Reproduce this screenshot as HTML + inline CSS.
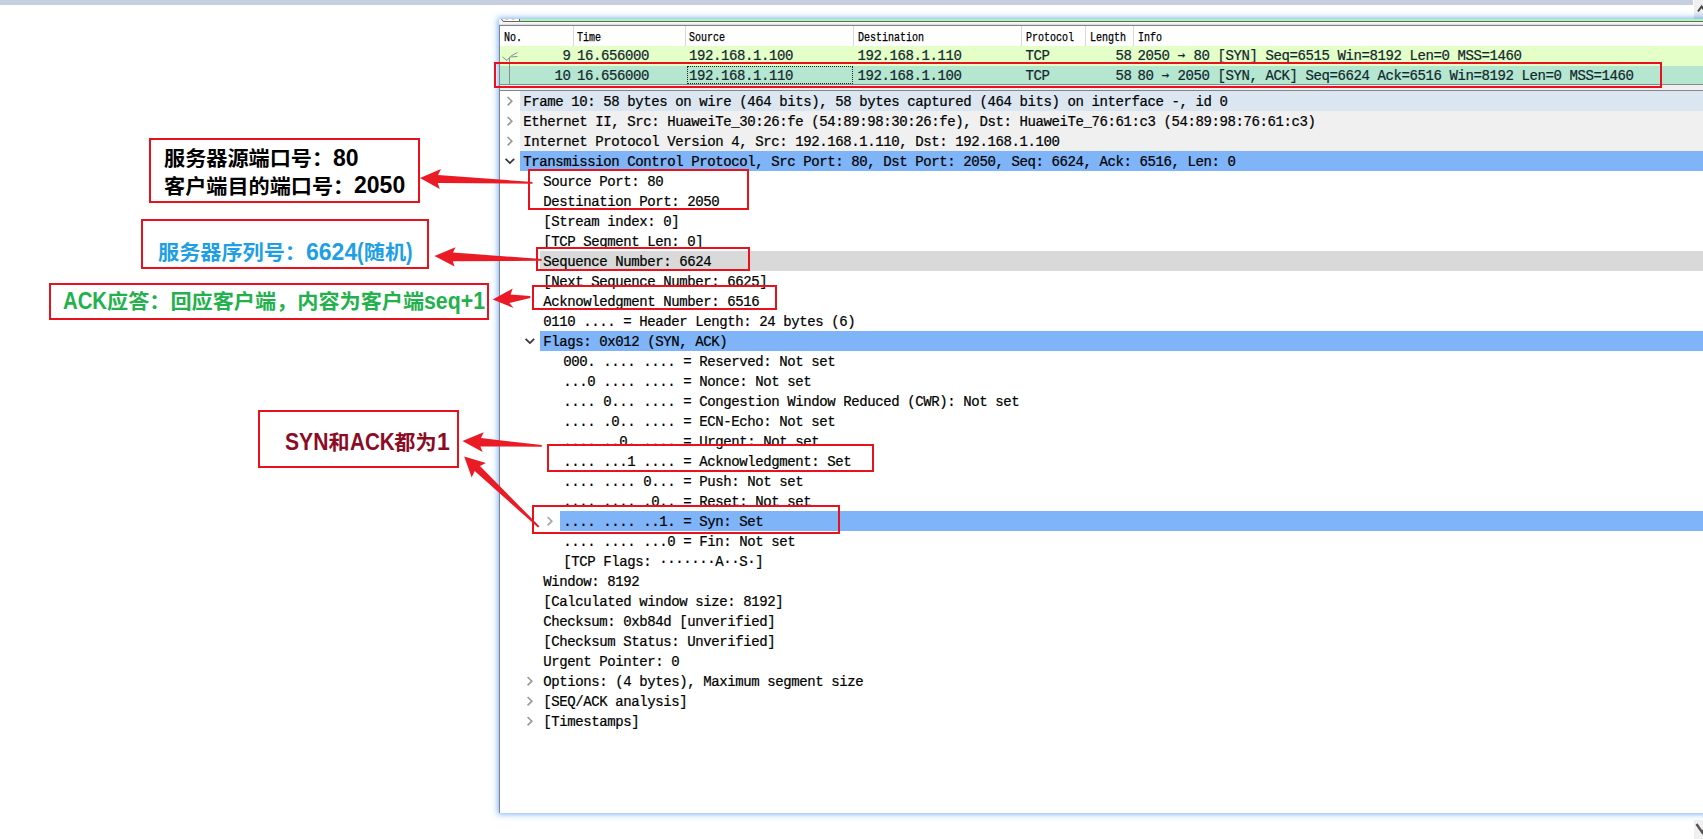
<!DOCTYPE html>
<html lang="zh-CN"><head><meta charset="utf-8"><title>TCP SYN ACK</title>
<style>
html,body{margin:0;padding:0;background:#fff;}
body{width:1703px;height:839px;position:relative;overflow:hidden;}
.abs{position:absolute;}
.topband{left:0;top:0;width:1693px;height:5px;background:#c6cfe0;}
.sbtop{left:1694px;top:0;width:9px;height:19px;background:linear-gradient(#f0f0f0 60%,#d8dde6);}
.sbbot{left:1694px;top:820px;width:9px;height:19px;background:#f0f0f0;}
.ws{left:499px;top:19px;width:1210px;height:794px;background:#fff;box-shadow:0 0 6px 1px rgba(95,160,250,.85);}
.mono{font-family:"Liberation Mono", "DejaVu Sans Mono", monospace;font-size:14px;letter-spacing:-0.4px;color:#000;-webkit-text-stroke:0.22px #000;white-space:pre;line-height:20px;height:20px;}
.hdr{font-family:"Liberation Mono","DejaVu Sans Mono",monospace;font-size:12px;line-height:20px;height:20px;color:#000;-webkit-text-stroke:0.25px #000;white-space:pre;transform:scaleX(.8333);transform-origin:0 50%;}
.pl{color:#12272e;-webkit-text-stroke-color:#12272e;}
.ar{font-family:"DejaVu Sans Mono","Liberation Mono",monospace;font-size:12.5px;letter-spacing:0;display:inline-block;width:8px;text-align:center;position:relative;top:-1px;}
.row{left:520px;height:20px;width:1190px;}
.box{border:2px solid #e9111b;box-sizing:border-box;}
.note{font-family:"Liberation Sans","Noto Sans CJK SC",sans-serif;font-weight:bold;font-size:21.15px;white-space:pre;line-height:28.63px;transform:scaleY(.95);transform-origin:0 0;}
.l{display:inline-block;transform-origin:0 50%;line-height:20px;vertical-align:-0.3px;}

</style></head><body>
<div class="abs topband"></div>
<div class="abs sbtop"></div>
<div class="abs sbbot"></div>
<svg class="abs" style="left:1694px;top:0" width="9" height="19" viewBox="0 0 9 19"><path d="M4 11.5 L7.6 6.5 L11 11.5" fill="none" stroke="#444" stroke-width="2"/></svg>
<svg class="abs" style="left:1694px;top:820px" width="9" height="19" viewBox="0 0 9 19"><path d="M2.5 4 L8.3 12.5 L13 4" fill="none" stroke="#555" stroke-width="2.4"/></svg>
<div class="abs ws"></div>
<div class="abs" style="left:499px;top:19px;width:1204px;height:2px;background:#aafaa8"></div>
<div class="abs" style="left:499px;top:19px;width:21px;height:3px;background:#f2f2f2"></div>
<div class="abs" style="left:503px;top:19px;width:16px;height:2px;background:#fff;border-right:1px solid #6a6464"></div>
<svg class="abs" style="left:499px;top:19px" width="8" height="4" viewBox="0 0 8 4"><path d="M2 -0.5 L4.2 2.4 L8 2.4" fill="none" stroke="#6a6464" stroke-width="1"/></svg>
<div class="abs" style="left:506px;top:19px;width:2px;height:1px;background:#f4d526"></div>
<div class="abs" style="left:512px;top:19px;width:2px;height:1px;background:#f4d526"></div>
<div class="abs" style="left:503px;top:21px;width:1200px;height:1px;background:#6a6464"></div>
<div class="abs" style="left:499px;top:22px;width:1204px;height:3px;background:linear-gradient(#fcfcfc,#ededed 70%,#c8c8cc)"></div>
<div class="abs" style="left:499px;top:25px;width:1204px;height:1px;background:#80848e"></div>
<div class="abs" style="left:499px;top:25px;width:1px;height:788px;background:#80848e"></div>
<div class="abs hdr" style="left:503.5px;top:27.5px">No.</div>
<div class="abs hdr" style="left:577px;top:27.5px">Time</div>
<div class="abs hdr" style="left:689px;top:27.5px">Source</div>
<div class="abs hdr" style="left:857.5px;top:27.5px">Destination</div>
<div class="abs hdr" style="left:1025.5px;top:27.5px">Protocol</div>
<div class="abs hdr" style="left:1089.5px;top:27.5px">Length</div>
<div class="abs hdr" style="left:1137.5px;top:27.5px">Info</div>
<div class="abs" style="left:573px;top:26px;width:1px;height:20px;background:#d9d9d9"></div>
<div class="abs" style="left:685px;top:26px;width:1px;height:20px;background:#d9d9d9"></div>
<div class="abs" style="left:853px;top:26px;width:1px;height:20px;background:#d9d9d9"></div>
<div class="abs" style="left:1021px;top:26px;width:1px;height:20px;background:#d9d9d9"></div>
<div class="abs" style="left:1085px;top:26px;width:1px;height:20px;background:#d9d9d9"></div>
<div class="abs" style="left:1133px;top:26px;width:1px;height:20px;background:#d9d9d9"></div>
<div class="abs" style="left:500px;top:46px;width:1203px;height:20px;background:#e4ffc7"></div>
<div class="abs" style="left:500px;top:66px;width:1203px;height:18px;background:#b5e6cf"></div>
<div class="abs" style="left:500px;top:84px;width:1203px;height:1px;background:#8a8a8a"></div>
<div class="abs" style="left:500px;top:85px;width:1203px;height:5px;background:#f0f0f0"></div>
<div class="abs" style="left:500px;top:90px;width:1203px;height:1px;background:#82878f"></div>
<div class="abs mono pl" style="left:500px;top:46px;width:70.5px;text-align:right">9</div>
<div class="abs mono pl" style="left:577px;top:46px">16.656000</div>
<div class="abs mono pl" style="left:689px;top:46px">192.168.1.100</div>
<div class="abs mono pl" style="left:857.5px;top:46px">192.168.1.110</div>
<div class="abs mono pl" style="left:1025.5px;top:46px">TCP</div>
<div class="abs mono pl" style="left:1089px;top:46px;width:42.5px;text-align:right">58</div>
<div class="abs mono pl" style="left:1137.5px;top:46px">2050 <span class="ar">→</span> 80 [SYN] Seq=6515 Win=8192 Len=0 MSS=1460</div>
<div class="abs mono pl" style="left:500px;top:65.8px;width:70.5px;text-align:right">10</div>
<div class="abs mono pl" style="left:577px;top:65.8px">16.656000</div>
<div class="abs mono pl" style="left:689px;top:65.8px">192.168.1.110</div>
<div class="abs mono pl" style="left:857.5px;top:65.8px">192.168.1.100</div>
<div class="abs mono pl" style="left:1025.5px;top:65.8px">TCP</div>
<div class="abs mono pl" style="left:1089px;top:65.8px;width:42.5px;text-align:right">58</div>
<div class="abs mono pl" style="left:1137.5px;top:65.8px">80 <span class="ar">→</span> 2050 [SYN, ACK] Seq=6624 Ack=6516 Win=8192 Len=0 MSS=1460</div>
<div class="abs" style="left:687px;top:66px;width:166px;height:18px;box-sizing:border-box;border:1px dotted #222"></div>
<svg class="abs" style="left:499px;top:46px" width="24" height="40" viewBox="0 0 24 40"><g fill="none" stroke="#8c8c98" stroke-width="1"><path d="M3.5 11 L8 14.5 L10.5 11.5"/><path d="M10.5 38 L10.5 11 L18.5 10.5"/><path d="M12 10 L18.5 6.5"/></g></svg>
<div class="abs" style="left:520px;top:91px;width:1183px;height:20px;background:#dce6f1"></div>
<div class="abs mono" style="left:523.3px;top:91.5px">Frame 10: 58 bytes on wire (464 bits), 58 bytes captured (464 bits) on interface -, id 0</div>
<svg class="abs" style="left:504.5px;top:95px" width="10" height="12" viewBox="0 0 10 12"><path d="M2.6 2 L6.8 6.2 L2.6 10.4" fill="none" stroke="#9c9c9c" stroke-width="1.7"/></svg>
<div class="abs" style="left:520px;top:111px;width:1183px;height:20px;background:#f0f0f0"></div>
<div class="abs mono" style="left:523.3px;top:111.5px">Ethernet II, Src: HuaweiTe_30:26:fe (54:89:98:30:26:fe), Dst: HuaweiTe_76:61:c3 (54:89:98:76:61:c3)</div>
<svg class="abs" style="left:504.5px;top:115px" width="10" height="12" viewBox="0 0 10 12"><path d="M2.6 2 L6.8 6.2 L2.6 10.4" fill="none" stroke="#9c9c9c" stroke-width="1.7"/></svg>
<div class="abs" style="left:520px;top:131px;width:1183px;height:20px;background:#f0f0f0"></div>
<div class="abs mono" style="left:523.3px;top:131.5px">Internet Protocol Version 4, Src: 192.168.1.110, Dst: 192.168.1.100</div>
<svg class="abs" style="left:504.5px;top:135px" width="10" height="12" viewBox="0 0 10 12"><path d="M2.6 2 L6.8 6.2 L2.6 10.4" fill="none" stroke="#9c9c9c" stroke-width="1.7"/></svg>
<div class="abs" style="left:520px;top:151px;width:1183px;height:20px;background:#7fb4f8"></div>
<div class="abs mono" style="left:523.3px;top:151.5px">Transmission Control Protocol, Src Port: 80, Dst Port: 2050, Seq: 6624, Ack: 6516, Len: 0</div>
<svg class="abs" style="left:503.5px;top:156.5px" width="12" height="10" viewBox="0 0 12 10"><path d="M1.6 1.8 L5.9 6.1 L10.2 1.8" fill="none" stroke="#383838" stroke-width="1.8"/></svg>
<div class="abs mono" style="left:543.3px;top:171.5px">Source Port: 80</div>
<div class="abs mono" style="left:543.3px;top:191.5px">Destination Port: 2050</div>
<div class="abs mono" style="left:543.3px;top:211.5px">[Stream index: 0]</div>
<div class="abs mono" style="left:543.3px;top:231.5px">[TCP Segment Len: 0]</div>
<div class="abs" style="left:540px;top:251px;width:1163px;height:20px;background:#d9d9d9"></div>
<div class="abs mono" style="left:543.3px;top:251.5px">Sequence Number: 6624</div>
<div class="abs mono" style="left:543.3px;top:271.5px">[Next Sequence Number: 6625]</div>
<div class="abs mono" style="left:543.3px;top:291.5px">Acknowledgment Number: 6516</div>
<div class="abs mono" style="left:543.3px;top:311.5px">0110 .... = Header Length: 24 bytes (6)</div>
<div class="abs" style="left:540px;top:331px;width:1163px;height:20px;background:#7fb4f8"></div>
<div class="abs mono" style="left:543.3px;top:331.5px">Flags: 0x012 (SYN, ACK)</div>
<svg class="abs" style="left:523.5px;top:336.5px" width="12" height="10" viewBox="0 0 12 10"><path d="M1.6 1.8 L5.9 6.1 L10.2 1.8" fill="none" stroke="#383838" stroke-width="1.8"/></svg>
<div class="abs mono" style="left:563.3px;top:351.5px">000. .... .... = Reserved: Not set</div>
<div class="abs mono" style="left:563.3px;top:371.5px">...0 .... .... = Nonce: Not set</div>
<div class="abs mono" style="left:563.3px;top:391.5px">.... 0... .... = Congestion Window Reduced (CWR): Not set</div>
<div class="abs mono" style="left:563.3px;top:411.5px">.... .0.. .... = ECN-Echo: Not set</div>
<div class="abs mono" style="left:563.3px;top:431.5px">.... ..0. .... = Urgent: Not set</div>
<div class="abs mono" style="left:563.3px;top:451.5px">.... ...1 .... = Acknowledgment: Set</div>
<div class="abs mono" style="left:563.3px;top:471.5px">.... .... 0... = Push: Not set</div>
<div class="abs mono" style="left:563.3px;top:491.5px">.... .... .0.. = Reset: Not set</div>
<div class="abs" style="left:560px;top:511px;width:1143px;height:20px;background:#7fb4f8"></div>
<div class="abs mono" style="left:563.3px;top:511.5px">.... .... ..1. = Syn: Set</div>
<svg class="abs" style="left:544.5px;top:515px" width="10" height="12" viewBox="0 0 10 12"><path d="M2.6 2 L6.8 6.2 L2.6 10.4" fill="none" stroke="#a6a6a6" stroke-width="1.7"/></svg>
<div class="abs mono" style="left:563.3px;top:531.5px">.... .... ...0 = Fin: Not set</div>
<div class="abs mono" style="left:563.3px;top:551.5px">[TCP Flags: ·······A··S·]</div>
<div class="abs mono" style="left:543.3px;top:571.5px">Window: 8192</div>
<div class="abs mono" style="left:543.3px;top:591.5px">[Calculated window size: 8192]</div>
<div class="abs mono" style="left:543.3px;top:611.5px">Checksum: 0xb84d [unverified]</div>
<div class="abs mono" style="left:543.3px;top:631.5px">[Checksum Status: Unverified]</div>
<div class="abs mono" style="left:543.3px;top:651.5px">Urgent Pointer: 0</div>
<div class="abs mono" style="left:543.3px;top:671.5px">Options: (4 bytes), Maximum segment size</div>
<svg class="abs" style="left:524.5px;top:675px" width="10" height="12" viewBox="0 0 10 12"><path d="M2.6 2 L6.8 6.2 L2.6 10.4" fill="none" stroke="#9c9c9c" stroke-width="1.7"/></svg>
<div class="abs mono" style="left:543.3px;top:691.5px">[SEQ/ACK analysis]</div>
<svg class="abs" style="left:524.5px;top:695px" width="10" height="12" viewBox="0 0 10 12"><path d="M2.6 2 L6.8 6.2 L2.6 10.4" fill="none" stroke="#9c9c9c" stroke-width="1.7"/></svg>
<div class="abs mono" style="left:543.3px;top:711.5px">[Timestamps]</div>
<svg class="abs" style="left:524.5px;top:715px" width="10" height="12" viewBox="0 0 10 12"><path d="M2.6 2 L6.8 6.2 L2.6 10.4" fill="none" stroke="#9c9c9c" stroke-width="1.7"/></svg>
<div class="abs" style="left:494px;top:62px;width:1168px;height:26px;box-sizing:border-box;border:2px solid #e9111b"></div>
<div class="abs" style="left:528px;top:169px;width:221px;height:41px;box-sizing:border-box;border:2px solid #e9111b"></div>
<div class="abs" style="left:536px;top:247px;width:214px;height:24px;box-sizing:border-box;border:2px solid #e9111b"></div>
<div class="abs" style="left:532px;top:285px;width:245px;height:24.5px;box-sizing:border-box;border:2px solid #e9111b"></div>
<div class="abs" style="left:547px;top:444px;width:327px;height:28px;box-sizing:border-box;border:2px solid #e9111b"></div>
<div class="abs" style="left:532px;top:505px;width:308px;height:28.5px;box-sizing:border-box;border:2px solid #e9111b"></div>
<div class="abs" style="left:149px;top:138px;width:271px;height:65px;box-sizing:border-box;border:2px solid #e9111b"></div>
<div class="abs" style="left:141px;top:219px;width:288px;height:50px;box-sizing:border-box;border:2px solid #e9111b"></div>
<div class="abs" style="left:49px;top:283px;width:440px;height:37px;box-sizing:border-box;border:2px solid #e9111b"></div>
<div class="abs" style="left:258px;top:410px;width:201px;height:58px;box-sizing:border-box;border:2px solid #e9111b"></div>
<div class="abs note" style="left:164px;top:146px;color:#000">服务器源端口号：<span class="l" style="font-size:24.6px;transform:scaleX(0.936);margin-right:-1.75px">80</span>
客户端目的端口号：<span class="l" style="font-size:24.6px;transform:scaleX(0.936);margin-right:-3.50px">2050</span></div>
<div class="abs note" style="left:158px;top:240px;color:#1e9fe5">服务器序列号：<span class="l" style="font-size:24.6px;transform:scaleX(0.936);margin-right:-3.50px">6624</span><span class="l" style="font-size:24.6px;transform:scaleX(0.8);margin-right:-1.64px">(</span>随机<span class="l" style="font-size:24.6px;transform:scaleX(0.8);margin-right:-1.64px">)</span></div>
<div class="abs note" style="left:63px;top:288.7px;color:#22b14c"><span class="l" style="font-size:24.6px;transform:scaleX(0.826);margin-right:-9.27px">ACK</span>应答：回应客户端，内容为客户端<span class="l" style="font-size:24.6px;transform:scaleX(0.866);margin-right:-9.44px">seq+1</span></div>
<div class="abs note" style="left:285px;top:430px;color:#8c0b25"><span class="l" style="font-size:24.6px;transform:scaleX(0.858);margin-right:-7.18px">SYN</span>和<span class="l" style="font-size:24.6px;transform:scaleX(0.84);margin-right:-8.53px">ACK</span>都为<span class="l" style="font-size:24.6px;transform:scaleX(0.936);margin-right:-0.88px">1</span></div>
<svg class="abs" style="left:0;top:0" width="1703" height="839" viewBox="0 0 1703 839">
<polygon points="420,178 441,169 438,175 532.5,182 532.5,183.8 437.7,183 439.8,189" fill="#ea1b25"/>
<polygon points="434.5,256 455.5,247.3 453,252.6 541.6,258.9 541.6,260.7 452.8,261.2 454.6,266.4" fill="#ea1b25"/>
<polygon points="492.7,299.4 512.7,288.6 510.6,294.4 530.3,296.1 530.3,297.9 509.4,303 513.6,308" fill="#ea1b25"/>
<polygon points="462.5,441 483.7,432.2 481,438.1 541.8,445 541.8,446.8 480.4,446.4 482.6,452.1" fill="#ea1b25"/>
<polygon points="464.2,456.4 485.9,463.1 480,466 539.4,526.3 538,527.6 474.7,471 471.7,477.6" fill="#ea1b25"/>
</svg>
</body></html>
